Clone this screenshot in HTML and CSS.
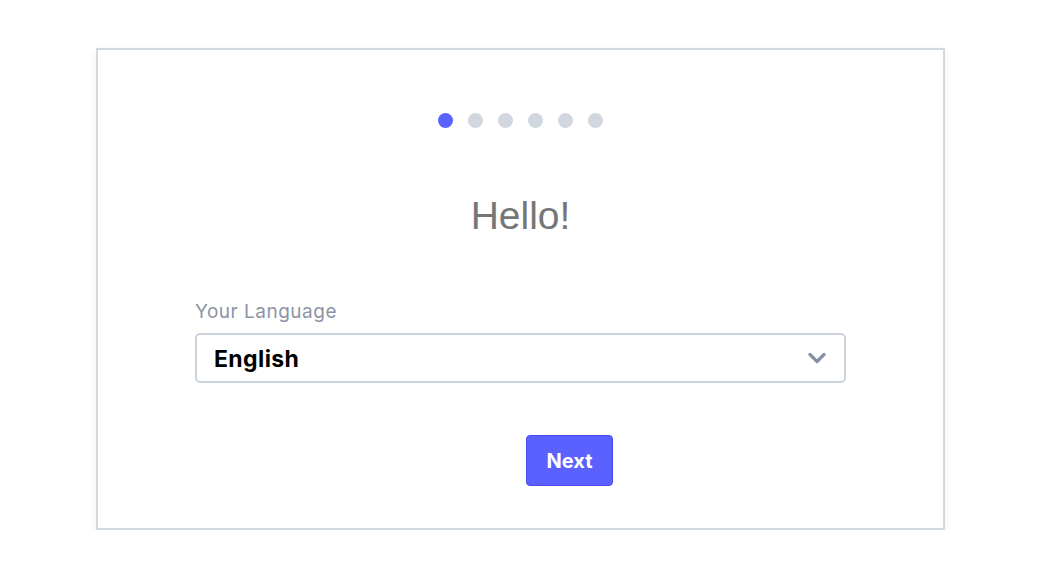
FILE: index.html
```html
<!DOCTYPE html>
<html>
<head>
<meta charset="utf-8">
<link rel="stylesheet" href="styles.css">
</head>
<body>
<div class="card">
  <div class="dots">
    <span class="dot active"></span>
    <span class="dot"></span>
    <span class="dot"></span>
    <span class="dot"></span>
    <span class="dot"></span>
    <span class="dot"></span>
  </div>
  <h1 class="title">Hello!</h1>
  <div class="field">
    <label class="label">Your Language</label>
    <div class="select">
      <span class="select-value">English</span>
      <svg class="chevron" width="18" height="12" viewBox="0 0 18 12"><path d="M2 2.5 L9 9.5 L16 2.5" fill="none" stroke="#8592a6" stroke-width="3.2" stroke-linecap="round" stroke-linejoin="round"/></svg>
    </div>
  </div>
  <div class="actions">
    <button class="btn">Next</button>
  </div>
</div>
</body>
</html>
```
FILE: styles.css
```css
* { box-sizing: border-box; }
html, body { margin: 0; padding: 0; background: #fff; }
body { font-family: Inter, "Liberation Sans", sans-serif; }
.card {
  margin: 48px 0 0 96px;
  width: 849px;
  height: 482px;
  border: 2px solid #d3d9e0;
  box-shadow: 0 3px 8px rgba(30, 40, 60, 0.08);
  padding: 63px 97px 0 97px;
  display: flex;
  flex-direction: column;
}
.dots {
  display: flex;
  justify-content: center;
  gap: 15px;
}
.dot {
  width: 15px;
  height: 15px;
  border-radius: 50%;
  background: #d1d7de;
}
.dot.active { background: #5b63fe; }
.title {
  margin: 64px 0 0 0;
  text-align: center;
  font-family: "Liberation Sans", Arial, sans-serif;
  font-weight: normal;
  font-size: 39px;
  line-height: 48px;
  color: #767676;
}
.field {
  margin-top: 61px;
  display: flex;
  flex-direction: column;
}
.label {
  font-size: 19px;
  letter-spacing: 0.5px;
  line-height: 22px;
  color: #8b95a5;
  margin-bottom: 10px;
}
.select {
  height: 50px;
  border: 2px solid #ccd3db;
  border-radius: 5px;
  display: flex;
  align-items: center;
  justify-content: space-between;
  padding: 0 18px 0 17px;
}
.select-value {
  font-size: 23px;
  letter-spacing: 0.4px;
  font-weight: 700;
  color: #000;
  margin-top: 2px;
}
.actions {
  margin-top: 52px;
  display: flex;
  justify-content: center;
  padding-left: 98px;
}
.btn {
  width: 87px;
  height: 51px;
  background: #5a61fe;
  border: 1px solid #454cee;
  border-radius: 4px;
  color: #fff;
  font-family: Inter, "Liberation Sans", sans-serif;
  font-weight: 700;
  font-size: 20px;
  padding: 0;
}
```
